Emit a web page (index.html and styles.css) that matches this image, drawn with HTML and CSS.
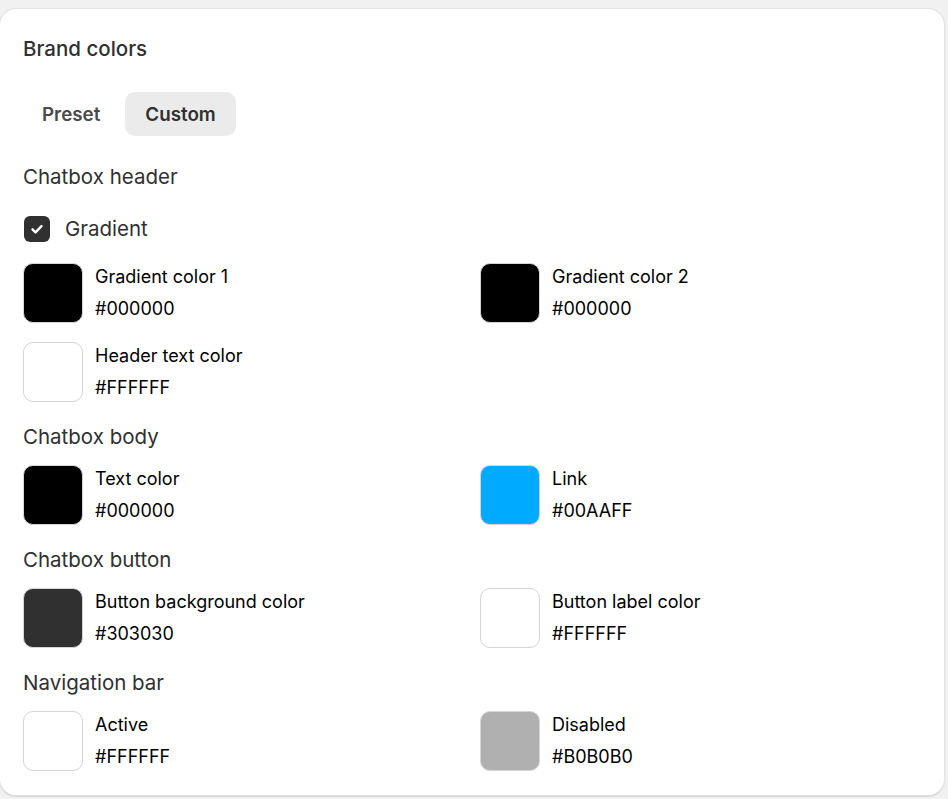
FILE: index.html
```html
<!DOCTYPE html>
<html lang="en">
<head>
<meta charset="utf-8">
<title>Brand colors</title>
<link rel="stylesheet" href="styles.css">
</head>
<body>
<div class="card">
  <h2 class="card-title">Brand colors</h2>
  <div class="tabs">
    <button class="tab">Preset</button>
    <button class="tab tab-active">Custom</button>
  </div>

  <section class="section">
    <h3 class="section-title">Chatbox header</h3>
    <label class="check">
      <span class="check-box">
        <svg viewBox="0 0 16 16" width="20" height="20"><path d="M4.4 8.3l2.4 2.4L11.6 5.7" fill="none" stroke="#fff" stroke-width="1.9" stroke-linecap="round" stroke-linejoin="round"/></svg>
      </span>
      <span class="check-label">Gradient</span>
    </label>
    <div class="grid">
      <div class="item"><span class="swatch" style="background:#000000"></span><div class="meta"><div class="name">Gradient color 1</div><div class="hex">#000000</div></div></div>
      <div class="item"><span class="swatch" style="background:#000000"></span><div class="meta"><div class="name">Gradient color 2</div><div class="hex">#000000</div></div></div>
      <div class="item"><span class="swatch" style="background:#FFFFFF"></span><div class="meta"><div class="name">Header text color</div><div class="hex">#FFFFFF</div></div></div>
    </div>
  </section>

  <section class="section">
    <h3 class="section-title">Chatbox body</h3>
    <div class="grid">
      <div class="item"><span class="swatch" style="background:#000000"></span><div class="meta"><div class="name">Text color</div><div class="hex">#000000</div></div></div>
      <div class="item"><span class="swatch" style="background:#00AAFF"></span><div class="meta"><div class="name">Link</div><div class="hex">#00AAFF</div></div></div>
    </div>
  </section>

  <section class="section">
    <h3 class="section-title">Chatbox button</h3>
    <div class="grid">
      <div class="item"><span class="swatch" style="background:#303030"></span><div class="meta"><div class="name">Button background color</div><div class="hex">#303030</div></div></div>
      <div class="item"><span class="swatch" style="background:#FFFFFF"></span><div class="meta"><div class="name">Button label color</div><div class="hex">#FFFFFF</div></div></div>
    </div>
  </section>

  <section class="section">
    <h3 class="section-title">Navigation bar</h3>
    <div class="grid">
      <div class="item"><span class="swatch" style="background:#FFFFFF"></span><div class="meta"><div class="name">Active</div><div class="hex">#FFFFFF</div></div></div>
      <div class="item"><span class="swatch" style="background:#B0B0B0"></span><div class="meta"><div class="name">Disabled</div><div class="hex">#B0B0B0</div></div></div>
    </div>
  </section>
</div>
</body>
</html>
```

FILE: styles.css
```css
* { box-sizing: border-box; }
html, body { margin: 0; padding: 0; }
body {
  background: #f1f1f1;
  font-family: Inter, "Noto Sans", sans-serif;
  color: #303030;
  padding: 9px 4px 2px 0;
}
.card {
  background: #fff;
  border-radius: 16px;
  box-shadow: 0 0 0 1px #e3e3e3, 0 1px 1px 1px rgba(0,0,0,0.12);
  padding: 26px 23px 24px 23px;
}
.card-title {
  margin: 0;
  font-size: 20.5px;
  font-weight: 500;
  line-height: 28px;
  color: #303030;
}
.tabs {
  display: flex;
  gap: 5px;
  margin-top: 29px;
  margin-left: -1px;
}
.tab {
  font-family: inherit;
  border: none;
  background: transparent;
  font-size: 18.8px;
  font-weight: 600;
  color: #4a4a4a;
  height: 44px;
  padding: 0 20px;
  border-radius: 10px;
  cursor: pointer;
}
.tab-active {
  background: #ebebeb;
  color: #303030;
}
.section {
  margin-top: 29px;
}
.section + .section { margin-top: 23px; }
.section-title {
  margin: 0;
  font-size: 20.5px;
  font-weight: 400;
  line-height: 24px;
  color: #303030;
}
.check {
  display: flex;
  align-items: center;
  gap: 15px;
  margin-top: 27px;
  margin-left: 1px;
}
.check-box {
  width: 26px;
  height: 26px;
  border-radius: 6px;
  background: #303030;
  display: flex;
  align-items: center;
  justify-content: center;
}
.check-label {
  font-size: 20.5px;
  line-height: 26px;
  color: #303030;
}
.check + .grid { margin-top: 21px; }
.grid {
  display: grid;
  grid-template-columns: 1fr 1fr;
  column-gap: 16px;
  row-gap: 19px;
  margin-top: 16px;
}
.item {
  display: flex;
  gap: 12px;
}
.swatch {
  width: 60px;
  height: 60px;
  flex: none;
  border-radius: 10px;
  border: 1px solid #d4d4d4;
}
.meta {
  display: flex;
  flex-direction: column;
  gap: 6px;
  padding-top: 1px;
}
.name, .hex {
  font-size: 18px;
  line-height: 26px;
  color: #000;
}
```
